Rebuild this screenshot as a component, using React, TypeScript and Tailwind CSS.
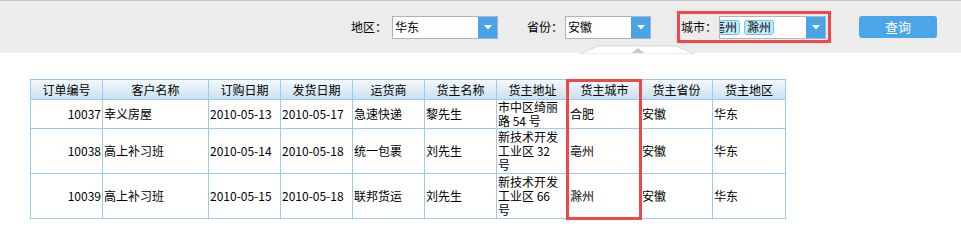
import React from "react";

const font = { fontFamily: '"Noto Sans CJK SC", "Liberation Sans", sans-serif' };

type Row = {
  id: string;
  customer: string;
  orderDate: string;
  shipDate: string;
  shipper: string;
  owner: string;
  address: string[];
  city: string;
  province: string;
  region: string;
  h: string;
};

const rows: Row[] = [
  {
    id: "10037",
    customer: "幸义房屋",
    orderDate: "2010-05-13",
    shipDate: "2010-05-17",
    shipper: "急速快递",
    owner: "黎先生",
    address: ["市中区绮丽", "路 54 号"],
    city: "合肥",
    province: "安徽",
    region: "华东",
    h: "h-[29px]",
  },
  {
    id: "10038",
    customer: "高上补习班",
    orderDate: "2010-05-14",
    shipDate: "2010-05-18",
    shipper: "统一包裹",
    owner: "刘先生",
    address: ["新技术开发", "工业区 32", "号"],
    city: "亳州",
    province: "安徽",
    region: "华东",
    h: "h-[45px]",
  },
  {
    id: "10039",
    customer: "高上补习班",
    orderDate: "2010-05-15",
    shipDate: "2010-05-18",
    shipper: "联邦货运",
    owner: "刘先生",
    address: ["新技术开发", "工业区 66", "号"],
    city: "滁州",
    province: "安徽",
    region: "华东",
    h: "h-[45px]",
  },
];

const headers = ["订单编号", "客户名称", "订购日期", "发货日期", "运货商", "货主名称", "货主地址", "货主城市", "货主省份", "货主地区"];
const widths = [72, 106, 72, 72, 72, 72, 72, 72, 72, 73];

function DropButton() {
  return (
    <div className="flex h-full w-[19px] shrink-0 items-center justify-center bg-[#48a4e7]">
      <svg width="8" height="5" viewBox="0 0 8 5">
        <polygon points="0,0 8,0 4,4.5" fill="#fff" />
      </svg>
    </div>
  );
}

function Combo({ value, width }: { value: string; width: string }) {
  return (
    <div className={`flex h-[23px] ${width} border border-[#a9b4c8] bg-white`}>
      <div className="flex flex-1 items-center pl-[2px] text-[12px] text-black">{value}</div>
      <DropButton />
    </div>
  );
}

function Tag({ text }: { text: string }) {
  return (
    <span className="flex h-[15px] shrink-0 items-center rounded-[3px] border border-[#6fc6ee] bg-[#c3eafb] px-[2px] text-[12px] leading-none text-black">
      {text}
    </span>
  );
}

export default function App() {
  return (
    <div className="h-[242px] w-[961px] bg-white text-black" style={font}>
      <div className="relative flex h-[53px] items-center border-t border-[#c4c4c4] bg-[#ececec] text-[12px]">
        <span className="ml-[351px] w-[41px]">地区：</span>
        <Combo value="华东" width="w-[106px]" />
        <span className="ml-[29px] w-[38px]">省份：</span>
        <Combo value="安徽" width="w-[86px]" />

        <div className="ml-[26px] flex h-[32px] w-[154px] items-center border-[3px] border-[#f04848] pl-[1px]">
          <span className="w-[38px] shrink-0">城市：</span>
          <div className="flex h-[23px] w-[107px] border border-[#a9b4c8] bg-white">
            <div className="flex flex-1 items-center gap-[4px] overflow-hidden">
              <div className="-ml-[10px] flex items-center gap-[4px]">
                <Tag text="亳州" />
                <Tag text="滁州" />
              </div>
            </div>
            <DropButton />
          </div>
        </div>

        <button className="ml-[28px] flex h-[22px] w-[78px] items-center justify-center rounded-[3px] bg-[#49a7e9] text-[13px] text-white">
          查询
        </button>

        <svg className="absolute left-[580px] top-[44px]" width="114" height="9" viewBox="0 0 114 9">
          <polygon points="0,9 18,1 96,1 114,9" fill="#fff" stroke="#dadada" strokeWidth="1" />
          <polygon points="52,8 58,3 64,8" fill="#c8c8c8" />
        </svg>
      </div>

      <div className="relative ml-[30px] mt-[26px] w-[756px]">
        <table className="table-fixed border-collapse text-[12px] leading-[14px]">
          <colgroup>
            {widths.map((w, i) => (
              <col key={i} style={{ width: w }} />
            ))}
          </colgroup>
          <thead>
            <tr className="h-[20px] bg-linear-to-b from-[#f4f9fc] to-[#c9e0ed]">
              {headers.map((h) => (
                <th key={h} className="border border-[#99cbf8] p-0 text-center font-normal">
                  {h}
                </th>
              ))}
            </tr>
          </thead>
          <tbody>
            {rows.map((r) => (
              <tr key={r.id} className={r.h}>
                <td className="border border-[#99cbf8] p-0 pr-[1px] text-right">{r.id}</td>
                <td className="border border-[#99cbf8] px-[1px] py-0">{r.customer}</td>
                <td className="border border-[#99cbf8] px-[1px] py-0">{r.orderDate}</td>
                <td className="border border-[#99cbf8] px-[1px] py-0">{r.shipDate}</td>
                <td className="border border-[#99cbf8] px-[1px] py-0">{r.shipper}</td>
                <td className="border border-[#99cbf8] px-[1px] py-0">{r.owner}</td>
                <td className="border border-[#99cbf8] px-[1px] py-0">
                  {r.address.map((l, i) => (
                    <div key={i} className="whitespace-pre">{l}</div>
                  ))}
                </td>
                <td className="border border-[#99cbf8] px-[1px] py-0">{r.city}</td>
                <td className="border border-[#99cbf8] px-[1px] py-0">{r.province}</td>
                <td className="border border-[#99cbf8] px-[1px] py-0">{r.region}</td>
              </tr>
            ))}
          </tbody>
        </table>
        <div className="absolute left-[536px] top-0 h-[141px] w-[76px] border-[3px] border-[#f04848]" />
      </div>
    </div>
  );
}
